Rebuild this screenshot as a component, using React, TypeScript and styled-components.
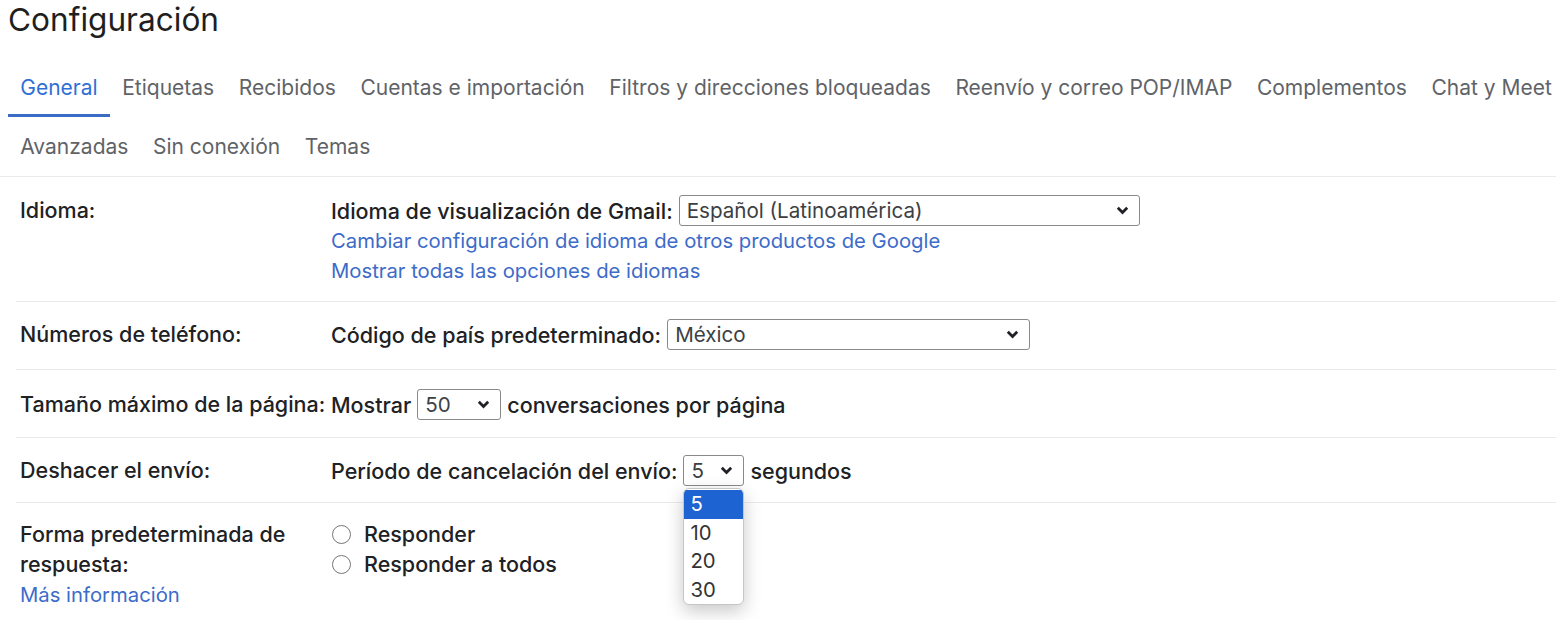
import React from "react";
import styled, { createGlobalStyle } from "styled-components";

const Global = createGlobalStyle`
  html, body { margin: 0; padding: 0; background: #fff; }
  body { font-family: Inter, Roboto, "Noto Sans", Arial, sans-serif; color: #202124; }
  * { box-sizing: border-box; }
`;

const Page = styled.div`
  width: 1556px;
  height: 620px;
  overflow: hidden;
  position: relative;
`;

const Title = styled.h1`
  margin: 0;
  padding: 0 0 0 8px;
  height: 58px;
  font-size: 31.6px;
  line-height: 40px;
  font-weight: 400;
  color: #1f1f1f;
`;

const Tabs = styled.nav`
  border-bottom: 1px solid #e8eaed;
`;

const TabRow = styled.div`
  display: flex;
  padding-left: 8px;
  white-space: nowrap;
`;

const Tab = styled.div<{ $active?: boolean }>`
  height: 59px;
  padding: 0 12.3px;
  display: flex;
  align-items: center;
  flex: none;
  font-size: 21px;
  color: ${(p) => (p.$active ? "#2f6fd6" : "#5f6368")};
  box-shadow: ${(p) => (p.$active ? "inset 0 -3px 0 #3a6cc6" : "none")};
  white-space: nowrap;
`;

const Rows = styled.div`
  margin-left: 16px;
`;

const Row = styled.div<{ $first?: boolean; $pt?: number; $pb?: number }>`
  display: grid;
  grid-template-columns: 315px 1fr;
  padding: ${(p) => p.$pt ?? 18}px 0 ${(p) => p.$pb ?? 16}px;
  border-top: ${(p) => (p.$first ? "none" : "1px solid #e8eaed")};
  font-size: 21.5px;
  line-height: 30px;
`;

const Label = styled.div`
  padding-left: 4px;
  font-weight: 500;
  color: #202124;
  white-space: nowrap;
`;

const WrapLabel = styled(Label)`
  white-space: normal;
  width: 290px;
`;

const Content = styled.div`
  display: flex;
  flex-direction: column;
`;

const Line = styled.div`
  display: flex;
  align-items: center;
  gap: 6px;
  font-weight: 500;
  white-space: nowrap;
`;

const Link = styled.a`
  color: #3d6bc9;
  font-weight: 400;
  font-size: 20.3px;
  text-decoration: none;
  cursor: pointer;
`;

const SelectWrap = styled.div`
  position: relative;
`;

const SelectBox = styled.div<{ $w: number }>`
  width: ${(p) => p.$w}px;
  height: 31px;
  border: 1px solid #8a8a8a;
  border-radius: 3px;
  background: #fff;
  display: flex;
  align-items: center;
  justify-content: space-between;
  padding: 0 10px 0 7px;
  font-weight: 400;
  color: #3c4043;
  font-size: 20.6px;
`;

const Chevron = () => (
  <svg width="13" height="9" viewBox="0 0 13 9">
    <path d="M1.8 1.8 L6.5 6.5 L11.2 1.8" fill="none" stroke="#202124" strokeWidth="2.8" />
  </svg>
);

const Menu = styled.ul`
  position: absolute;
  top: 33px;
  left: 0;
  width: 61px;
  margin: 0;
  padding: 1px 0 0;
  list-style: none;
  background: #fff;
  border: 1px solid #c6c6c6;
  border-radius: 6px;
  box-shadow: 0 6px 18px rgba(0, 0, 0, 0.22);
  overflow: hidden;
  z-index: 10;
`;

const Option = styled.li<{ $sel?: boolean }>`
  height: 28.5px;
  line-height: 28.5px;
  padding-left: 6px;
  font-size: 20.3px;
  font-weight: 400;
  background: ${(p) => (p.$sel ? "#1d63d1" : "transparent")};
  color: ${(p) => (p.$sel ? "#fff" : "#333")};
`;

const Radio = styled.span`
  width: 19px;
  height: 19px;
  border-radius: 50%;
  border: 1.5px solid #767676;
  margin: 0 7px 0 1px;
  flex: none;
`;

const Select = ({ value, w }: { value: string; w: number }) => (
  <SelectBox $w={w}>
    <span>{value}</span>
    <Chevron />
  </SelectBox>
);

const tabRows = [
  [
    "General",
    "Etiquetas",
    "Recibidos",
    "Cuentas e importación",
    "Filtros y direcciones bloqueadas",
    "Reenvío y correo POP/IMAP",
    "Complementos",
    "Chat y Meet",
  ],
  ["Avanzadas", "Sin conexión", "Temas"],
];

export default function App() {
  return (
    <Page>
      <Global />
      <Title>Configuración</Title>
      <Tabs>
        {tabRows.map((row, r) => (
          <TabRow key={r}>
            {row.map((t) => (
              <Tab key={t} $active={t === "General"}>
                {t}
              </Tab>
            ))}
          </TabRow>
        ))}
      </Tabs>
      <Rows>
        <Row $first $pb={15}>
          <Label>Idioma:</Label>
          <Content>
            <Line>
              Idioma de visualización de Gmail:
              <Select value="Español (Latinoamérica)" w={461} />
            </Line>
            <Link>Cambiar configuración de idioma de otros productos de Google</Link>
            <Link>Mostrar todas las opciones de idiomas</Link>
          </Content>
        </Row>
        <Row $pt={17} $pb={19}>
          <Label>Números de teléfono:</Label>
          <Content>
            <Line>
              Código de país predeterminado:
              <Select value="México" w={363} />
            </Line>
          </Content>
        </Row>
        <Row $pt={19} $pb={17}>
          <Label>Tamaño máximo de la página:</Label>
          <Content>
            <Line>
              Mostrar
              <Select value="50" w={84} />
              conversaciones por página
            </Line>
          </Content>
        </Row>
        <Row $pt={17} $pb={16}>
          <Label>Deshacer el envío:</Label>
          <Content>
            <Line>
              Período de cancelación del envío:
              <SelectWrap>
                <Select value="5" w={61} />
                <Menu>
                  <Option $sel>5</Option>
                  <Option>10</Option>
                  <Option>20</Option>
                  <Option>30</Option>
                </Menu>
              </SelectWrap>
              segundos
            </Line>
          </Content>
        </Row>
        <Row $pt={16}>
          <WrapLabel>
            Forma predeterminada de respuesta:
            <br />
            <Link>Más información</Link>
          </WrapLabel>
          <Content>
            <Line>
              <Radio />
              Responder
            </Line>
            <Line>
              <Radio />
              Responder a todos
            </Line>
          </Content>
        </Row>
      </Rows>
    </Page>
  );
}
